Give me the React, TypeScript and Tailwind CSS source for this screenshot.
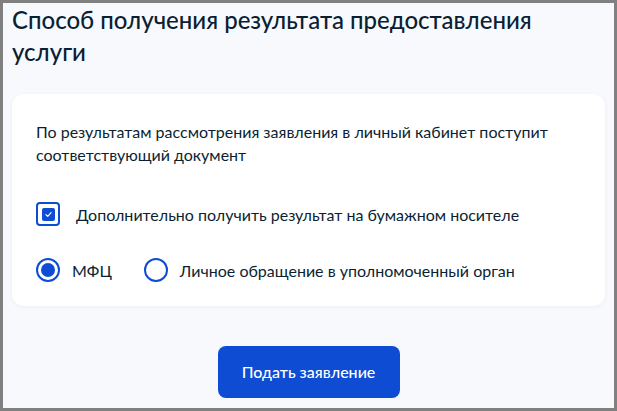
import React, { useState } from 'react';

type Receipt = 'MFC' | 'PERSONAL';

const App: React.FC = () => {
  const [paper, setPaper] = useState(true);
  const [receipt, setReceipt] = useState<Receipt>('MFC');

  return (
    <div className="h-[411px] w-[617px] border-[3px] border-[#808080] bg-[#f8f9fd] font-['Lato','Noto_Sans',sans-serif] text-[#0b1f33]">
      <div className="flex h-full flex-col px-[9px] pt-[1px]">
        <h1 className="pr-8 text-[24px] leading-[32px] font-medium">
          Способ получения результата предоставления услуги
        </h1>

        <section className="mt-[26px] rounded-xl bg-white px-6 pt-[26px] pb-[24px] shadow-[0_1px_4px_rgba(11,31,51,0.05)]">
          <p className="text-[16px] leading-[23px]">
            По результатам рассмотрения заявления в личный кабинет поступит соответствующий документ
          </p>

          <label className="mt-[36px] flex cursor-pointer items-center gap-[16px]">
            <span className="flex h-6 w-6 items-center justify-center rounded-[4px] border-2 border-[#0d4cd3] bg-white">
              {paper && (
                <span className="flex h-[13px] w-[13px] items-center justify-center rounded-[2px] bg-[#0d4cd3]">
                  <svg viewBox="0 0 12 12" className="h-[9px] w-[9px]" fill="none">
                    <path d="M2.5 6.2 5 8.5 9.5 3.5" stroke="#fff" strokeWidth="1.6" strokeLinecap="round" strokeLinejoin="round" />
                  </svg>
                </span>
              )}
            </span>
            <input type="checkbox" className="hidden" checked={paper} onChange={e => setPaper(e.target.checked)} />
            <span className="text-[16px] leading-[23px]">Дополнительно получить результат на бумажном носителе</span>
          </label>

          <div className="mt-[32px] flex items-center gap-[32px]">
            <label className="flex cursor-pointer items-center gap-[12px]" onClick={() => setReceipt('MFC')}>
              <span className="flex h-6 w-6 items-center justify-center rounded-full border-2 border-[#0d4cd3] bg-white">
                {receipt === 'MFC' && <span className="h-[14px] w-[14px] rounded-full bg-[#0d4cd3]" />}
              </span>
              <span className="text-[16px] leading-[23px]">МФЦ</span>
            </label>
            <label className="flex cursor-pointer items-center gap-[12px]" onClick={() => setReceipt('PERSONAL')}>
              <span className="flex h-6 w-6 items-center justify-center rounded-full border-2 border-[#0d4cd3] bg-white">
                {receipt === 'PERSONAL' && <span className="h-[14px] w-[14px] rounded-full bg-[#0d4cd3]" />}
              </span>
              <span className="text-[16px] leading-[23px]">Личное обращение в уполномоченный орган</span>
            </label>
          </div>
        </section>

        <div className="mt-[40px] flex justify-center">
          <button className="h-[52px] w-[182px] rounded-lg bg-[#0d4cd3] text-[16px] font-medium text-white">
            Подать заявление
          </button>
        </div>
      </div>
    </div>
  );
};

export default App;
